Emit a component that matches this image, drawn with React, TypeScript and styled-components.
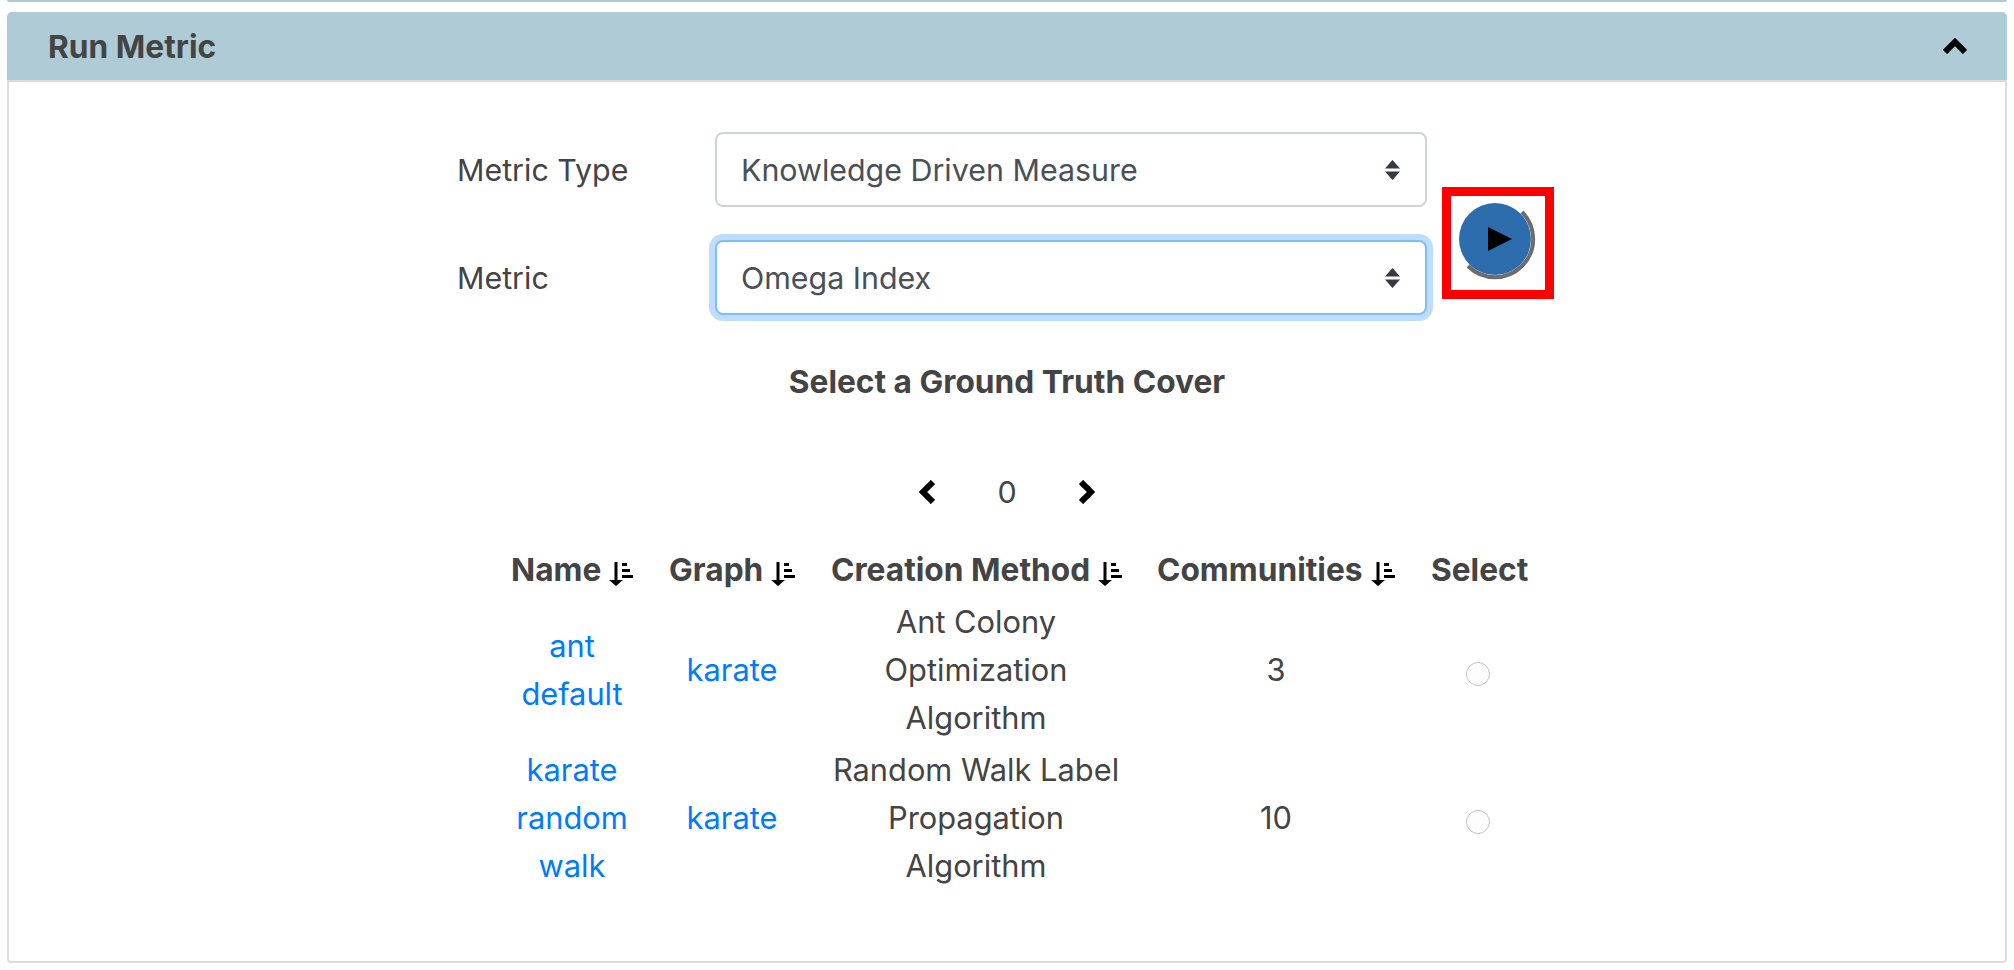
import React from "react";
import styled, { createGlobalStyle } from "styled-components";

const Global = createGlobalStyle`
  html, body { margin: 0; padding: 0; background: #fff; }
  body { font-family: Inter, "Liberation Sans", sans-serif; color: #444; overflow: hidden; }
`;

const Page = styled.div`
  width: 2014px;
  height: 970px;
  padding: 0 7px;
  box-sizing: border-box;
  display: flex;
  flex-direction: column;
`;
const PrevPanelEdge = styled.div`
  height: 2px;
  background: #aecbd6;
  border-radius: 0 0 4px 4px;
  margin-bottom: 10px;
  flex: none;
`;
const Panel = styled.section`
  height: 951px;
  flex: none;
  display: flex;
  flex-direction: column;
  border-radius: 5px;
`;
const PanelHeader = styled.header`
  height: 68px;
  flex: none;
  background: #aecbd6;
  border-radius: 5px 5px 0 0;
  display: flex;
  align-items: center;
  justify-content: space-between;
  padding: 0 40px 0 41px;
`;
const PanelTitle = styled.h2`
  margin: 0;
  font-size: 31.7px;
  font-weight: 700;
  color: #444;
`;
const PanelBody = styled.div`
  flex: 1;
  border: 2px solid #dcdcdc;
  border-radius: 0 0 4px 4px;
  display: flex;
  flex-direction: column;
  align-items: center;
  min-height: 0;
`;
const FormArea = styled.div`
  align-self: flex-start;
  margin: 50px 0 0 448px;
  display: flex;
  align-items: flex-start;
  gap: 15px;
`;
const FormRows = styled.div`
  display: flex;
  flex-direction: column;
  gap: 33px;
`;
const FormRow = styled.div`
  display: flex;
  align-items: center;
`;
const FieldLabel = styled.label`
  width: 258px;
  font-size: 30.4px;
  color: #444;
`;
const arrows = encodeURIComponent(
  `<svg xmlns="http://www.w3.org/2000/svg" width="15" height="20" viewBox="0 0 15 20"><path fill="#343a40" d="M7.5 0 15 8.5H0zM7.5 20 0 11.5h15z"/></svg>`
);
const Select = styled.select<{ $focused?: boolean }>`
  appearance: none;
  width: 712px;
  height: 75px;
  box-sizing: border-box;
  padding: 0 24px;
  font-family: inherit;
  font-size: 30.4px;
  color: #495057;
  background: #fff url("data:image/svg+xml,${arrows}") no-repeat right 25px center;
  border: 2px solid ${(p) => (p.$focused ? "#80bdff" : "#ced4da")};
  border-radius: 8px;
  box-shadow: ${(p) => (p.$focused ? "0 0 0 6px rgba(0,123,255,.25)" : "none")};
  outline: none;
`;
const Highlight = styled.div`
  width: 112px;
  height: 112px;
  margin-top: 55px;
  box-sizing: border-box;
  border: 9px solid #f00;
  flex: none;
  display: flex;
  align-items: center;
  justify-content: center;
`;
const PlayButton = styled.button`
  width: 94px;
  height: 94px;
  padding: 0;
  border: 0;
  background: none;
  display: block;
`;
const SectionTitle = styled.h3`
  margin: 43px 0 0;
  font-size: 31.7px;
  line-height: 48px;
  font-weight: 700;
  color: #444;
`;
const Pager = styled.div`
  margin-top: 62px;
  width: 176px;
  display: flex;
  align-items: center;
  justify-content: space-between;
  font-size: 30.4px;
  line-height: 48px;
  color: #444;
`;
const CoverTable = styled.table`
  align-self: flex-start;
  margin: 30px 0 0 484px;
  border-collapse: collapse;
  table-layout: fixed;
  width: 1053px;
  font-size: 30.8px;
  line-height: 48px;
  text-align: center;
  color: #444;
`;
const HeadCell = styled.th<{ $w: number }>`
  width: ${(p) => p.$w}px;
  padding: 0 18px 2px;
  font-size: 31.7px;
  font-weight: 700;
  white-space: nowrap;
  box-sizing: border-box;
`;
const Cell = styled.td`
  padding: 2px 18px;
  vertical-align: middle;
`;
const TableLink = styled.a`
  color: #007bff;
  text-decoration: none;
`;
const Radio = styled.input`
  appearance: none;
  display: block;
  width: 24px;
  height: 24px;
  margin: 7px auto 0;
  position: relative;
  left: -2px;
  box-sizing: border-box;
  background: #fdfdfd;
  border: 1.5px solid #c4c4c4;
  border-radius: 50%;
`;
const SortGlyph = styled.svg`
  display: inline-block;
  vertical-align: -5px;
  margin-left: 8px;
`;

const SortIcon = () => (
  <SortGlyph width="25" height="24" viewBox="0 0 25 24">
    <path d="M5.500 0h3v18h5.500L7 24 0 18h5.500z" fill="#000" />
    <path d="M13 1h5v3h-5zM13 7h8v3h-8zM13 13h11v3H13z" fill="#000" />
  </SortGlyph>
);
const Chevron = ({ d, w, h }: { d: string; w: number; h: number }) => (
  <svg width={w} height={h} viewBox={`0 0 ${w} ${h}`}>
    <path d={d} fill="none" stroke="#000" strokeWidth="6" />
  </svg>
);

const rows = [
  { name: "ant default", method: "Ant Colony Optimization Algorithm", count: 3 },
  { name: "karate random walk", method: "Random Walk Label Propagation Algorithm", count: 10 },
];
const heads: [string, number, boolean][] = [
  ["Name", 158, true],
  ["Graph", 162, true],
  ["Creation Method", 326, true],
  ["Communities", 274, true],
  ["Select", 133, false],
];

export default function App() {
  return (
    <Page>
      <Global />
      <PrevPanelEdge />
      <Panel>
        <PanelHeader>
          <PanelTitle>Run Metric</PanelTitle>
          <Chevron w={24} h={16} d="M2 14 12 4 22 14" />
        </PanelHeader>
        <PanelBody>
          <FormArea>
            <FormRows>
              <FormRow>
                <FieldLabel>Metric Type</FieldLabel>
                <Select defaultValue="k">
                  <option value="k">Knowledge Driven Measure</option>
                </Select>
              </FormRow>
              <FormRow>
                <FieldLabel>Metric</FieldLabel>
                <Select $focused defaultValue="o">
                  <option value="o">Omega Index</option>
                </Select>
              </FormRow>
            </FormRows>
            <Highlight>
              <PlayButton aria-label="Run">
                <svg width="94" height="94" viewBox="0 0 94 94">
                  <path d="M71 16A38 38 0 0 1 17 70" fill="none" stroke="#6c6c6c" strokeWidth="4" />
                  <circle cx="44" cy="43" r="36" fill="#2e6dad" />
                  <path d="M37 31 61 43 37 55z" fill="#000" />
                </svg>
              </PlayButton>
            </Highlight>
          </FormArea>
          <SectionTitle>Select a Ground Truth Cover</SectionTitle>
          <Pager>
            <Chevron w={16} h={24} d="M14 2 4 12 14 22" />
            <span>0</span>
            <Chevron w={16} h={24} d="M2 2 12 12 2 22" />
          </Pager>
          <CoverTable>
            <thead>
              <tr>
                {heads.map(([label, w, sortable]) => (
                  <HeadCell key={label} $w={w}>
                    {label}
                    {sortable && <SortIcon />}
                  </HeadCell>
                ))}
              </tr>
            </thead>
            <tbody>
              {rows.map((r) => (
                <tr key={r.name}>
                  <Cell>
                    <TableLink href="#">{r.name}</TableLink>
                  </Cell>
                  <Cell>
                    <TableLink href="#">karate</TableLink>
                  </Cell>
                  <Cell>{r.method}</Cell>
                  <Cell>{r.count}</Cell>
                  <Cell>
                    <Radio type="radio" name="cover" />
                  </Cell>
                </tr>
              ))}
            </tbody>
          </CoverTable>
        </PanelBody>
      </Panel>
    </Page>
  );
}
